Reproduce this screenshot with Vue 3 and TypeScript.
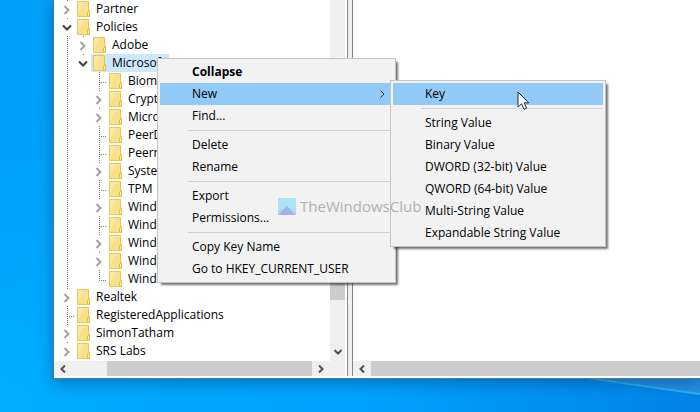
<script setup lang="ts">
interface TreeNode {
  label: string
  level: number
  state: 'open' | 'closed' | 'leaf'
  last?: boolean
  selected?: boolean
}

interface MenuEntry {
  label: string
  bold?: boolean
  active?: boolean
  submenu?: boolean
}

const nodes: TreeNode[] = [
  { label: 'Partner', level: 0, state: 'closed' },
  { label: 'Policies', level: 0, state: 'open' },
  { label: 'Adobe', level: 1, state: 'closed' },
  { label: 'Microsoft', level: 1, state: 'open', last: true, selected: true },
  { label: 'Biometrics', level: 2, state: 'leaf' },
  { label: 'Crypto', level: 2, state: 'closed' },
  { label: 'Microsoft', level: 2, state: 'closed' },
  { label: 'PeerDist', level: 2, state: 'leaf' },
  { label: 'Peernet', level: 2, state: 'leaf' },
  { label: 'System', level: 2, state: 'closed' },
  { label: 'TPM', level: 2, state: 'leaf' },
  { label: 'Windows', level: 2, state: 'closed' },
  { label: 'Windows', level: 2, state: 'leaf' },
  { label: 'Windows', level: 2, state: 'closed' },
  { label: 'Windows', level: 2, state: 'closed' },
  { label: 'Windows', level: 2, state: 'leaf', last: true },
  { label: 'Realtek', level: 0, state: 'closed' },
  { label: 'RegisteredApplications', level: 0, state: 'leaf' },
  { label: 'SimonTatham', level: 0, state: 'closed' },
  { label: 'SRS Labs', level: 0, state: 'closed' },
]

const mainMenu: MenuEntry[][] = [
  [
    { label: 'Collapse', bold: true },
    { label: 'New', active: true, submenu: true },
    { label: 'Find...' },
  ],
  [{ label: 'Delete' }, { label: 'Rename' }],
  [{ label: 'Export' }, { label: 'Permissions...' }],
  [{ label: 'Copy Key Name' }, { label: 'Go to HKEY_CURRENT_USER' }],
]

const newMenu: MenuEntry[][] = [
  [{ label: 'Key', active: true }],
  [
    { label: 'String Value' },
    { label: 'Binary Value' },
    { label: 'DWORD (32-bit) Value' },
    { label: 'QWORD (64-bit) Value' },
    { label: 'Multi-String Value' },
    { label: 'Expandable String Value' },
  ],
]

const menus = [
  { name: 'context', groups: mainMenu },
  { name: 'new', groups: newMenu },
]
</script>

<template>
  <div class="desktop">
    <svg class="beam" viewBox="0 0 120 36" preserveAspectRatio="none" aria-hidden="true">
      <path d="M0 2 L120 2 L120 19 Z" fill="#2590e4" />
      <path d="M0 2 L120 19 L120 17 L20 3 Z" fill="#2fb0ee" />
    </svg>
    <main class="window">
      <div class="panes">
        <section class="tree-pane">
          <ul class="tree">
            <li v-for="(node, i) in nodes" :key="i" class="row">
              <span
                v-for="n in node.level"
                :key="n"
                class="guide"
                :class="{ line: n === 1 }"
              ></span>
              <span
                class="guide"
                :class="[node.state === 'leaf' ? 'line branch' : 'joint', { last: node.last }]"
              >
                <button v-if="node.state === 'closed'" class="expander" :aria-label="'Expand ' + node.label">
                  <svg width="10" height="10" viewBox="0 0 10 10"><path d="M2.5 1 L6.5 5 L2.5 9" fill="none" stroke="#a3a3a3" stroke-width="2" /></svg>
                </button>
                <button v-else-if="node.state === 'open'" class="expander" :aria-label="'Collapse ' + node.label">
                  <svg width="10" height="10" viewBox="0 0 10 10"><path d="M1 2.5 L5 6.5 L9 2.5" fill="none" stroke="#404040" stroke-width="2" /></svg>
                </button>
              </span>
              <span class="entry" :class="{ selected: node.selected }">
                <svg class="folder" width="14" height="18" viewBox="0 0 14 18" aria-hidden="true">
                  <path d="M0.5 1.5 H11.5 V10.5 H12.5 V16.5 H0.5 Z" fill="#fbe08c" stroke="#e6c75c" />
                  <path d="M1 2 H7 L1 14 Z" fill="#fde7a2" />
                  <path d="M10.5 16 V12 L12.5 10.5 V16.5 Z" fill="#ffee94" stroke="#e2c23e" />
                </svg>
                <span class="label">{{ node.label }}</span>
              </span>
            </li>
          </ul>
          <div class="vbar">
            <div class="vthumb"></div>
            <button class="arrow" aria-label="Scroll down">
              <svg width="10" height="10" viewBox="0 0 10 10"><path d="M1.5 3 L5 6.5 L8.5 3" fill="none" stroke="#505050" stroke-width="2" /></svg>
            </button>
          </div>
          <div class="hbar">
            <button class="arrow" aria-label="Scroll left">
              <svg width="10" height="10" viewBox="0 0 10 10"><path d="M7 1.5 L3.5 5 L7 8.5" fill="none" stroke="#505050" stroke-width="2" /></svg>
            </button>
            <div class="hthumb inset"></div>
            <button class="arrow" aria-label="Scroll right">
              <svg width="10" height="10" viewBox="0 0 10 10"><path d="M3 1.5 L6.5 5 L3 8.5" fill="none" stroke="#505050" stroke-width="2" /></svg>
            </button>
          </div>
        </section>
        <div class="splitter"></div>
        <section class="value-pane">
          <div class="values"></div>
          <div class="hbar">
            <button class="arrow" aria-label="Scroll values left">
              <svg width="10" height="10" viewBox="0 0 10 10"><path d="M7 1.5 L3.5 5 L7 8.5" fill="none" stroke="#505050" stroke-width="2" /></svg>
            </button>
            <div class="hthumb"></div>
          </div>
        </section>
      </div>
    </main>

    <div v-for="menu in menus" :key="menu.name" class="menu" :class="menu.name" role="menu">
      <div v-for="(group, g) in menu.groups" :key="g" class="group">
        <button
          v-for="item in group"
          :key="item.label"
          class="item"
          :class="{ bold: item.bold, active: item.active }"
          role="menuitem"
        >
          <span>{{ item.label }}</span>
          <svg v-if="item.submenu" width="8" height="10" viewBox="0 0 8 10" aria-hidden="true"><path d="M1.5 1.5 L5 5 L1.5 8.5" fill="none" stroke="#333" /></svg>
        </button>
      </div>
    </div>

    <div class="watermark">
      <svg width="18" height="17" viewBox="0 0 18 17" aria-hidden="true">
        <rect width="18" height="17" fill="#aee3f3" />
        <path d="M0 17 L9 8 L18 17 Z" fill="#a3b4e4" />
        <path d="M0 17 V14 L7 10 Z M18 17 V14 L11 10 Z" fill="#b0cdf0" />
      </svg>
      <span>TheWindowsClub</span>
    </div>

    <svg class="cursor" width="14" height="20" viewBox="0 0 14 20" aria-hidden="true">
      <path d="M1 1 V16 L4.5 12.8 L7 18.3 L9.6 17.2 L7.2 11.8 H11.8 Z" fill="#fff" stroke="#1c2a44" />
    </svg>
  </div>
</template>

<style>
body {
  margin: 0;
}
</style>

<style scoped>
.desktop {
  position: relative;
  box-sizing: border-box;
  min-height: 100vh;
  padding-left: 53px;
  overflow: hidden;
  background:
    radial-gradient(circle at 0 100%, #00aeff 0, transparent 320px),
    linear-gradient(90deg, #009ff8 0%, #00a4fe 50%, #0090f0 80%, #0084e6 100%);
  font-family: "Open Sans", "Noto Sans", sans-serif;
  font-size: 12px;
  color: #000;
}
button {
  margin: 0;
  padding: 0;
  border: 0;
  background: none;
  font: inherit;
  color: inherit;
}
.beam {
  position: absolute;
  right: 0;
  bottom: 0;
  width: 120px;
  height: 36px;
}
.window {
  position: relative;
  border-left: 1px solid #3a76a8;
  border-bottom: 1px solid #4a7fa8;
  background: #fff;
  box-shadow: 0 4px 14px rgba(0, 40, 90, 0.4);
}
.panes {
  display: flex;
  padding-bottom: 2px;
}
.tree-pane {
  display: grid;
  grid-template: auto 15px / 276px 15px;
  border-right: 2px solid #fff;
  background: #f0f0f0;
}
.tree {
  margin: 0;
  padding: 0 0 1px 5px;
  overflow: hidden;
  list-style: none;
  background: #fff;
}
.row {
  display: flex;
  height: 18px;
}
.guide {
  position: relative;
  display: flex;
  flex: none;
  align-items: center;
  justify-content: center;
  width: 16px;
  height: 18px;
}
.line::before {
  content: "";
  position: absolute;
  top: 0;
  bottom: 0;
  left: 8px;
  width: 1px;
  background: repeating-linear-gradient(#808080 0 1px, transparent 1px 2px);
}
.line.last::before {
  bottom: 9px;
}
.branch::after {
  content: "";
  position: absolute;
  top: 10px;
  left: 8px;
  width: 8px;
  height: 1px;
  background: repeating-linear-gradient(90deg, #808080 0 1px, transparent 1px 2px);
}
.joint::before {
  content: "";
  position: absolute;
  top: 0;
  left: 8px;
  width: 1px;
  height: 1px;
  background: #808080;
}
.expander {
  display: flex;
  padding-top: 2px;
}
.entry {
  display: flex;
  padding: 0 4px 0 2px;
}
.folder {
  flex: none;
}
.label {
  padding-left: 5px;
  line-height: 18px;
  white-space: nowrap;
}
.selected {
  background: #cce8ff;
}
.vbar {
  display: flex;
  flex-direction: column;
  background: #f0f0f0;
}
.vthumb {
  flex: 1;
  margin: 120px 0 43px;
  background: #cdcdcd;
}
.arrow {
  display: flex;
  flex: none;
  align-items: center;
  justify-content: center;
  width: 18px;
  height: 15px;
}
.vbar .arrow {
  width: 15px;
  height: 18px;
}
.hbar {
  display: flex;
  height: 15px;
  background: #f0f0f0;
}
.hthumb {
  flex: 1;
  background: #cdcdcd;
}
.hthumb.inset {
  margin-left: 35px;
}
.splitter {
  width: 4px;
  border: solid #828790;
  border-width: 0 1px;
  background: #f0f0f0;
}
.value-pane {
  display: flex;
  flex: 1;
  flex-direction: column;
}
.values {
  flex: 1;
  background: #fff;
}
.menu {
  position: absolute;
  box-sizing: border-box;
  padding: 2px;
  border: 1px solid #c4c4c4;
  background: #f2f2f2;
  box-shadow: 3px 3px 2px -1px rgba(0, 0, 0, 0.55);
}
.context {
  top: 58px;
  left: 157px;
  width: 239px;
}
.new {
  top: 80px;
  left: 390px;
  width: 216px;
}
.group + .group {
  padding-top: 7px;
  background: linear-gradient(#d0d0d0, #d0d0d0) 28px 3px / 100% 1px no-repeat;
}
.item {
  display: flex;
  align-items: center;
  justify-content: space-between;
  width: 100%;
  height: 22px;
  padding: 0 6px 0 32px;
  line-height: 22px;
  text-align: left;
  white-space: nowrap;
}
.bold {
  font-weight: 700;
}
.active {
  background: #91c9f7;
}
.watermark {
  position: absolute;
  top: 194px;
  left: 278px;
  display: flex;
  gap: 4px;
  align-items: center;
  height: 24px;
  color: #b0b0b0;
  font-size: 15px;
}
.cursor {
  position: absolute;
  top: 91px;
  left: 517px;
}
</style>
